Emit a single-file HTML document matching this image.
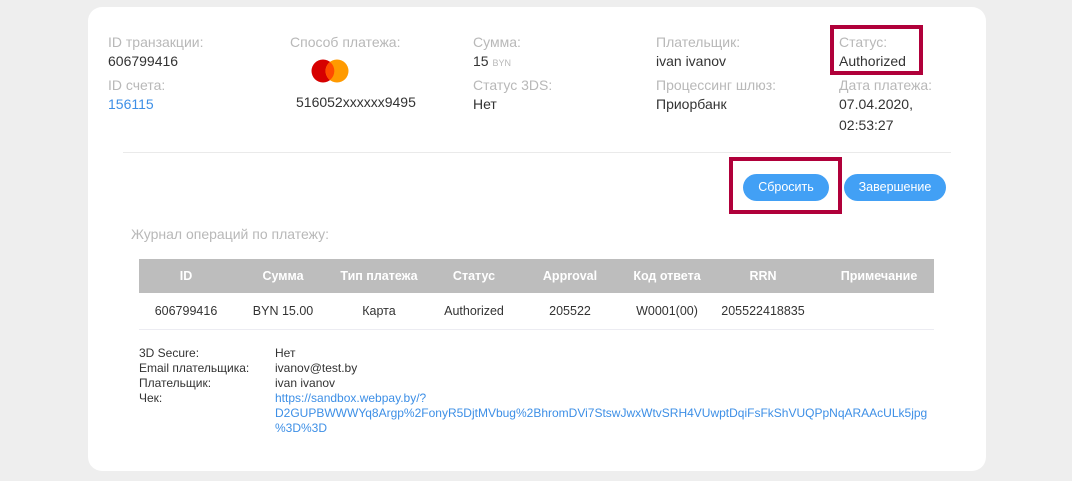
<!DOCTYPE html>
<html><head><meta charset="utf-8"><style>
*{margin:0;padding:0;box-sizing:border-box}
body{width:1072px;height:481px;background:#eeeeee;font-family:"Liberation Sans",sans-serif;position:relative;overflow:hidden}
.card{position:absolute;left:88px;top:7px;width:898px;height:464px;background:#fff;border-radius:14px}
.a{position:absolute;white-space:nowrap}
.l{color:#b8b8b8;font-size:14px}
.v{color:#333;font-size:14px}
.th{position:absolute;top:259px;height:34px;line-height:34px;color:#fff;font-weight:bold;font-size:12.5px;text-align:center}
.td{position:absolute;top:293px;height:36px;line-height:36px;color:#333;font-size:12.5px;text-align:center}
.btn{position:absolute;height:27px;border-radius:14px;background:#42a0f5;color:#fff;font-size:12.5px;text-align:center;line-height:27px}
.box{position:absolute;border:4px solid #b0003a}
.s{font-size:12px;color:#333;position:absolute;white-space:nowrap}
.lk{color:#3d8fe6}
</style></head><body>
<div class="card"></div>
<div class="a l" style="left:108px;top:34px">ID транзакции:</div>
<div class="a v" style="left:108px;top:53px">606799416</div>
<div class="a l" style="left:108px;top:77px">ID счета:</div>
<div class="a v lk" style="left:108px;top:96px">156115</div>

<div class="a l" style="left:290px;top:34px">Способ платежа:</div>
<svg class="a" style="left:311px;top:59px" width="38" height="24"><circle cx="12" cy="12" r="11.5" fill="#d60000"/><circle cx="26" cy="12" r="11.5" fill="#ff9a00"/><path d="M19 3A11.5 11.5 0 0 1 19 21A11.5 11.5 0 0 1 19 3Z" fill="#ff4a00"/></svg>
<div class="a v" style="left:296px;top:94px">516052xxxxxx9495</div>

<div class="a l" style="left:473px;top:34px">Сумма:</div>
<div class="a v" style="left:473px;top:53px">15 <span style="font-size:9px;color:#b8b8b8">BYN</span></div>
<div class="a l" style="left:473px;top:77px">Статус 3DS:</div>
<div class="a v" style="left:473px;top:96px">Нет</div>

<div class="a l" style="left:656px;top:34px">Плательщик:</div>
<div class="a v" style="left:656px;top:53px">ivan ivanov</div>
<div class="a l" style="left:656px;top:77px">Процессинг шлюз:</div>
<div class="a v" style="left:656px;top:96px">Приорбанк</div>

<div class="a l" style="left:839px;top:34px">Статус:</div>
<div class="a v" style="left:839px;top:53px">Authorized</div>
<div class="a l" style="left:839px;top:77px">Дата платежа:</div>
<div class="a v" style="left:839px;top:96px">07.04.2020,</div>
<div class="a v" style="left:839px;top:117px">02:53:27</div>
<div class="box" style="left:830px;top:25px;width:93px;height:50px"></div>

<div class="a" style="left:123px;top:152px;width:828px;height:1px;background:#eaeaea"></div>
<div class="btn" style="left:743px;top:174px;width:86px">Сбросить</div>
<div class="btn" style="left:844px;top:174px;width:102px">Завершение</div>
<div class="box" style="left:729px;top:157px;width:113px;height:57px"></div>

<div class="a" style="left:131px;top:226px;color:#b8b8b8;font-size:14px">Журнал операций по платежу:</div>
<div class="a" style="left:139px;top:259px;width:795px;height:34px;background:#bdbdbd"></div>
<div class="a" style="left:139px;top:329px;width:795px;height:1px;background:#ececf2"></div>
<div class="th" style="left:138px;width:96px">ID</div>
<div class="th" style="left:235px;width:96px">Сумма</div>
<div class="th" style="left:331px;width:96px">Тип платежа</div>
<div class="th" style="left:426px;width:96px">Статус</div>
<div class="th" style="left:522px;width:96px">Approval</div>
<div class="th" style="left:619px;width:96px">Код ответа</div>
<div class="th" style="left:715px;width:96px">RRN</div>
<div class="th" style="left:820px;width:118px">Примечание</div>
<div class="td" style="left:138px;width:96px">606799416</div>
<div class="td" style="left:235px;width:96px">BYN 15.00</div>
<div class="td" style="left:331px;width:96px">Карта</div>
<div class="td" style="left:426px;width:96px">Authorized</div>
<div class="td" style="left:522px;width:96px">205522</div>
<div class="td" style="left:619px;width:96px">W0001(00)</div>
<div class="td" style="left:695px;width:136px">205522418835</div>

<div class="s" style="left:139px;top:346px">3D Secure:</div>
<div class="s" style="left:139px;top:361px">Email плательщика:</div>
<div class="s" style="left:139px;top:376px">Плательщик:</div>
<div class="s" style="left:139px;top:391px">Чек:</div>
<div class="s" style="left:275px;top:346px">Нет</div>
<div class="s" style="left:275px;top:361px">ivanov@test.by</div>
<div class="s" style="left:275px;top:376px">ivan ivanov</div>
<div class="s lk" style="left:275px;top:391px;line-height:15px">https://sandbox.webpay.by/?<br>D2GUPBWWWYq8Argp%2FonyR5DjtMVbug%2BhromDVi7StswJwxWtvSRH4VUwptDqiFsFkShVUQPpNqARAAcULk5jpg<br>%3D%3D</div>
</body></html>
